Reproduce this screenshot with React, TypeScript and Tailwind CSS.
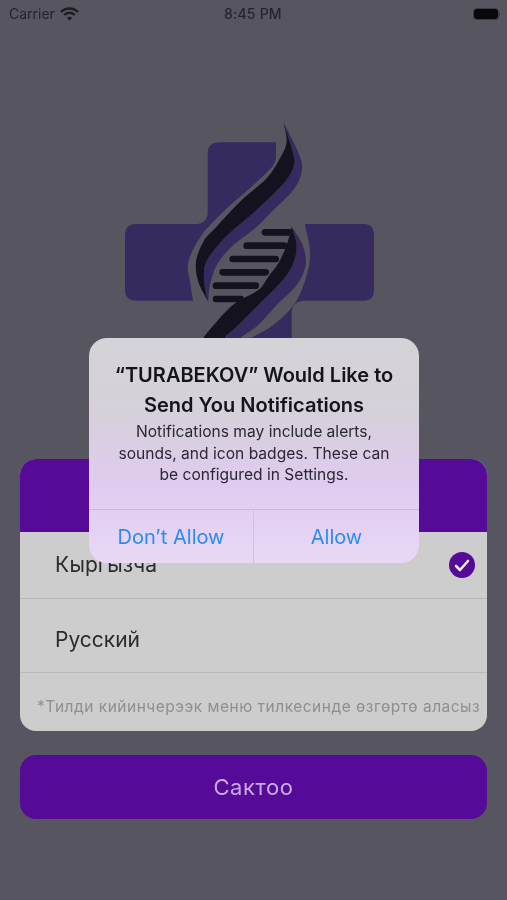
type P = [number, number];

function smooth(points: P[]): string {
  let d = "";
  for (let i = 0; i < points.length - 1; i++) {
    const p0 = points[Math.max(i - 1, 0)];
    const p1 = points[i];
    const p2 = points[i + 1];
    const p3 = points[Math.min(i + 2, points.length - 1)];
    const c1x = p1[0] + (p2[0] - p0[0]) / 6;
    const c1y = p1[1] + (p2[1] - p0[1]) / 6;
    const c2x = p2[0] - (p3[0] - p1[0]) / 6;
    const c2y = p2[1] - (p3[1] - p1[1]) / 6;
    d += ` C${c1x} ${c1y} ${c2x} ${c2y} ${p2[0]} ${p2[1]}`;
  }
  return d;
}

const upperLeft: P[] = [[520, 37], [530, 95], [510, 145], [470, 205], [390, 275], [315, 355], [280, 395], [258, 455], [265, 515], [295, 575]];
const upperMid: P[] = [[295, 575], [285, 535], [285, 465], [325, 405], [375, 355], [445, 295], [525, 215], [552, 165], [548, 125], [520, 37]];
const upperOuter: P[] = [[520, 37], [568, 135], [575, 185], [550, 240], [485, 305], [435, 355], [365, 410], [320, 465], [300, 525], [295, 575]];
const lowerInner: P[] = [[545, 350], [530, 405], [505, 460], [475, 500], [445, 540], [375, 580], [320, 635], [282, 680]];
const lowerMid: P[] = [[345, 680], [385, 645], [450, 580], [510, 520], [548, 465], [560, 405], [545, 350]];
const lowerOuter: P[] = [[545, 350], [578, 405], [587, 465], [560, 525], [500, 585], [445, 645], [395, 680]];
const gapLeft: P[] = [[498, 125], [490, 165], [430, 225], [340, 305], [275, 375], [235, 455], [240, 515], [250, 573]];
const gapRight: P[] = [[420, 685], [490, 645], [555, 580], [590, 495], [600, 425], [585, 345]];

const rungs = [
  [455, 367, 547],
  [400, 407, 532],
  [358, 447, 507],
  [328, 487, 477],
  [308, 527, 447],
  [308, 567, 402],
];

export default function App() {
  return (
    <div className="relative w-[507px] h-[900px] overflow-hidden bg-[#57555f] font-['Inter',sans-serif] blur-[0.4px]">
      <div className="relative flex h-[27px] items-center justify-between pl-[9px] pr-[7px] text-[14px] text-[#25232e]">
        <div className="flex items-center gap-[5px]">
          <span className="font-normal">Carrier</span>
          <svg width="19" height="14" viewBox="0 0 19 14">
            <path d="M1 5 A12 12 0 0 1 18 5" fill="none" stroke="#1d1b24" strokeWidth="2.4" />
            <path d="M4.2 8 A7.5 7.5 0 0 1 14.8 8" fill="none" stroke="#1d1b24" strokeWidth="2.4" />
            <path d="M7 11 L9.5 13.6 L12 11 A3.6 3.6 0 0 0 7 11Z" fill="#1d1b24" />
          </svg>
        </div>
        <span className="absolute left-[224px] font-medium tracking-[0.2px]">8:45 PM</span>
        <div className="flex items-center">
          <div className="h-[12px] w-[26px] rounded-[4px] border border-[#3d3b44] bg-[#08070b] p-px" />
          <div className="h-[4px] w-[1.5px] rounded-r-sm bg-[#3d3b44]" />
        </div>
      </div>

      <div className="ml-[110px] mt-[83px] h-[240px] w-[280px]">
        <svg width="280" height="240" viewBox="0 0 840 720">
          <path
            d="M330 97 H498 V342 H760 Q792 342 792 375 V540 Q792 572 760 572 H580 Q545 575 545 610 V720 H293 V572 H80 Q45 572 45 540 V375 Q45 342 80 342 H255 Q293 342 293 305 V130 Q293 97 330 97 Z"
            fill="#372a5f"
          />
          <path
            d={`M498 125${smooth(gapLeft)} L290 720 H420 L420 685${smooth(gapRight)} L585 300 L600 97 H498 Z`}
            fill="#57555f"
          />
          <path d={`M520 37${smooth(upperOuter)}${smooth(upperMid)} Z`} fill="#372a5f" />
          <path d={`M520 37${smooth(upperLeft)}${smooth(upperMid)} Z`} fill="#14121f" />
          <path d={`M545 350${smooth(lowerOuter)} V720 H345 V680${smooth(lowerMid)} Z`} fill="#372a5f" />
          <path d={`M545 350${smooth(lowerInner)} V720 H345 V680${smooth(lowerMid)} Z`} fill="#14121f" />
          {rungs.map(([x1, y, x2]) => (
            <rect key={y} x={x1} y={y - 10} width={x2 - x1} height={20} rx={10} fill="#14121f" />
          ))}
        </svg>
      </div>

      <div className="mx-[20px] mt-[109px] overflow-hidden rounded-[16px] bg-[#cdcdcd] text-[#2b2b2b]">
        <div className="h-[73px] bg-[#560a98]" />
        <div className="flex h-[67px] items-center justify-between border-b border-[#b9b9b9] pl-[35px] pr-[12px] text-[21px]">
          <span>Кыргызча</span>
          <div className="flex h-[26px] w-[26px] items-center justify-center rounded-full bg-[#560a98]">
            <svg width="16" height="13" viewBox="0 0 16 13">
              <path d="M2 7 L6 11 L14 2" fill="none" stroke="#ececec" strokeWidth="2.6" strokeLinecap="round" strokeLinejoin="round" />
            </svg>
          </div>
        </div>
        <div className="flex h-[74px] items-center border-b border-[#b9b9b9] pl-[35px] pt-[9px] text-[21px]">Русский</div>
        <div className="flex h-[58px] items-center whitespace-nowrap pl-[17px] pt-[10px] text-[15.5px] tracking-[0.5px] text-[#8f8f8f]">
          *Тилди кийинчерээк меню тилкесинде өзгөртө аласыз
        </div>
      </div>

      <div className="mx-[20px] mt-[24px] flex h-[64px] items-center justify-center rounded-[16px] bg-[#560a98] text-[22px] tracking-[0.6px] text-[#c9a8e6]">
        Сактоо
      </div>

      <div className="absolute left-[89px] top-[338px] w-[330px] overflow-hidden rounded-[18px] bg-[linear-gradient(180deg,#d4d3d7_0%,#d6d0da_35%,#dfcbf0_65%,#e8d8f6_100%)]">
        <div className="flex h-[171px] flex-col items-center pt-[22px] text-center">
          <div className="text-[20px] font-semibold leading-[30px] text-[#15141a]">
            “TURABEKOV” Would Like to
            <br />
            Send You Notifications
          </div>
          <div className="mt-[1px] text-[15.6px] leading-[21.7px] text-[#2a2832]">
            Notifications may include alerts,
            <br />
            sounds, and icon badges. These can
            <br />
            be configured in Settings.
          </div>
        </div>
        <div className="flex h-[54px] border-t border-[#c8bcd4] text-[20px] text-[#2a8cf2]">
          <div className="flex w-[165px] items-center justify-center border-r border-[#d0c4dc]">Don’t Allow</div>
          <div className="flex flex-1 items-center justify-center">Allow</div>
        </div>
      </div>
    </div>
  );
}
